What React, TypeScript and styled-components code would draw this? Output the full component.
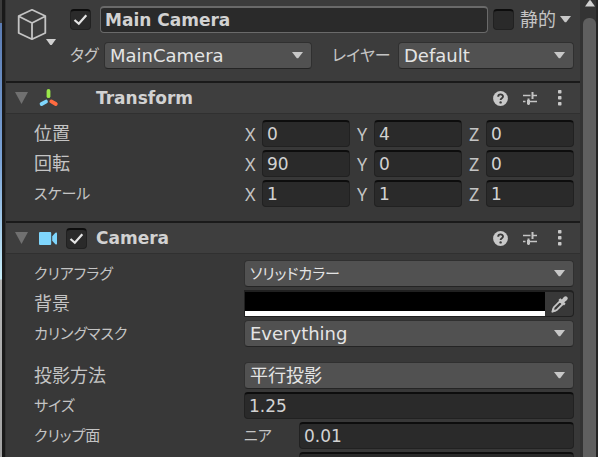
import React from "react";
import styled, { createGlobalStyle, css } from "styled-components";

const GlobalStyle = createGlobalStyle`
  *, *::before, *::after { box-sizing: border-box; }
  html, body { margin: 0; background: #383838; }
  body {
    font-family: "DejaVu Sans", "Noto Sans CJK JP", sans-serif;
    font-size: 18px;
    line-height: 24px;
    color: #c4c4c4;
    overflow: hidden;
  }
`;

const Window = styled.div`
  display: grid;
  grid-template-columns: 2px 4px minmax(0, 1fr) 16px 2px;
  height: 100vh;
  overflow: hidden;
`;

const SceneEdge = styled.div`
  background: linear-gradient(
    #3c3c3c 0 23px,
    #5b7bb2 23px,
    #7ba3d6 160px,
    #c8edf8 279px,
    #b4b4b4 280px,
    #a4a4a4 100%
  );
`;

const Divider = styled.div`
  background: #191919;
  border-right: 1px solid #303030;
`;

const Inspector = styled.main`
  min-width: 0;
  overflow: hidden;
`;

const ObjectHeader = styled.header`
  display: grid;
  grid-template-columns: 54px minmax(0, 1fr);
  padding: 6px 6px 12px 10px;
  background: #3c3c3c;
`;

const HeaderRows = styled.div`
  display: flex;
  flex-direction: column;
  gap: 9px;
`;

const HeaderRow = styled.div`
  display: flex;
  align-items: center;
  height: 27px;
`;

const IconButton = styled.button`
  display: flex;
  padding: 0;
  border: 0;
  background: none;
  color: #c4c4c4;
`;

const ObjectIconButton = styled(IconButton)`
  align-self: start;
  padding-top: 2px;
`;

const StaticMenu = styled(IconButton)`
  width: 18px;
  height: 27px;
  align-items: center;
  justify-content: center;
`;

const inputSurface = css`
  background: #2a2a2a;
  border: 1px solid #212121;
  border-top: 2px solid #0d0d0d;
  border-radius: 4px;
  outline: none;
`;

const TextInput = styled.input`
  ${inputSurface}
  display: block;
  flex: 1;
  width: 100%;
  min-width: 0;
  height: 27px;
  padding: 0 4px;
  font-family: "DejaVu Sans", sans-serif;
  font-size: 17px;
  color: #d2d2d2;
`;

const NameInput = styled(TextInput)`
  margin: 0 5px 0 9px;
  border: 1px solid #6a6a6a;
  border-top: 2px solid #6a6a6a;
  font-weight: 700;
`;

const CheckWrap = styled.span`
  display: grid;
  flex: none;
  width: 21px;
  height: 21px;
  > * { grid-area: 1 / 1; }
  > svg { pointer-events: none; }
`;

const CheckInput = styled.input`
  ${inputSurface}
  appearance: none;
  width: 21px;
  height: 21px;
  margin: 0;
`;

const StaticLabel = styled.label`
  margin-left: 6px;
  font-size: 18px;
`;

const HeaderLabel = styled.label<{ $width: number; $gap?: number }>`
  flex: none;
  width: ${(p) => p.$width}px;
  margin-left: ${(p) => p.$gap ?? 0}px;
  font-size: 16px;
  font-feature-settings: "palt";
  white-space: nowrap;
`;

const SelectWrap = styled.span<{ $grow?: number }>`
  display: grid;
  flex: ${(p) => p.$grow ?? 1} 1 0;
  min-width: 0;
  align-items: center;
  > * { grid-area: 1 / 1; }
  > svg { justify-self: end; margin-right: 9px; pointer-events: none; }
`;

const SelectBox = styled.select<{ $kana?: boolean }>`
  appearance: none;
  display: block;
  width: 100%;
  min-width: 0;
  height: 27px;
  padding: 0 28px 0 5px;
  border: 1px solid #303030;
  border-bottom-color: #242424;
  border-radius: 4px;
  background: #515151;
  color: #e4e4e4;
  font-family: "DejaVu Sans", "Noto Sans CJK JP", sans-serif;
  font-size: ${(p) => (p.$kana ? 15 : 18)}px;
  line-height: 24px;
  font-feature-settings: "palt";
  outline: none;
`;

const Component = styled.section`
  border-top: 2px solid #1a1a1a;
`;

const ComponentBar = styled.div`
  display: flex;
  align-items: center;
  height: 31px;
  padding: 0 13px 0 9px;
  background: #3e3e3e;
  border-bottom: 1px solid #303030;
`;

const BarIcon = styled.span`
  display: flex;
  flex: none;
  width: 27px;
  margin-left: 11px;
`;

const ToggleSlot = styled.span`
  flex: none;
  width: 30px;
`;

const Title = styled.h2`
  flex: 1;
  margin: 0;
  font-size: 17px;
  line-height: 24px;
  font-weight: 700;
  color: #d2d2d2;
`;

const Tools = styled.div`
  display: flex;
  align-items: center;
  gap: 14px;
`;

const Fields = styled.div`
  display: flex;
  flex-direction: column;
  gap: 3px;
  padding: 6px 6px 14px 28px;
`;

const Field = styled.div<{ $spaced?: boolean }>`
  display: grid;
  grid-template-columns: 210px minmax(0, 1fr);
  align-items: center;
  height: 27px;
  margin-top: ${(p) => (p.$spaced ? 12 : 0)}px;
`;

const FieldLabel = styled.label<{ $kana?: boolean }>`
  font-size: ${(p) => (p.$kana ? 15 : 18)}px;
  font-feature-settings: "palt";
  white-space: nowrap;
`;

const Vector = styled.div`
  display: grid;
  grid-template-columns: repeat(3, minmax(0, 1fr));
  gap: 6px;
`;

const Axis = styled.label`
  display: flex;
  align-items: center;
  font-family: "Noto Sans", sans-serif;
  font-size: 18px;
`;

const AxisName = styled.span`
  flex: none;
  width: 18px;
  padding-left: 1px;
`;

const ColorField = styled.div`
  display: flex;
  height: 27px;
  border: 1px solid #202020;
  border-top-width: 2px;
  border-radius: 0 4px 4px 0;
`;

const Swatch = styled.button`
  flex: 1;
  padding: 0;
  border: 0;
  border-bottom: 5px solid #ffffff;
  background: #000000;
`;

const Picker = styled(IconButton)`
  width: 28px;
  align-items: center;
  justify-content: center;
`;

const ClipRow = styled.div`
  display: grid;
  grid-template-columns: 55px minmax(0, 1fr);
  align-items: center;
`;

const ScrollBar = styled.aside`
  display: flex;
  flex-direction: column;
  padding: 0 0 0 3px;
  background: #333333;
`;

const ScrollUp = styled(IconButton)`
  height: 18px;
  justify-content: center;
`;

const ScrollThumb = styled.div`
  flex: 1;
  border-radius: 6px 6px 0 0;
  background: #5f5f5f;
`;

const FarEdge = styled.div`
  background: #242424;
`;

const Caret = () => (
  <svg width="11" height="7" viewBox="0 0 11 7" aria-hidden="true">
    <path d="M0 0h11L6.2 6.2h-1.4z" fill="#c8c8c8" />
  </svg>
);

const CubeIcon = () => (
  <svg width="42" height="38" viewBox="0 0 42 38" fill="none" aria-hidden="true">
    <path
      d="M16 1.8 29.3 8v17L16 31.2 2.7 25V8zM2.7 8.2 16 15l13.3-6.8M16 15v16"
      stroke="#c4c4c4"
      strokeWidth="1.8"
      strokeLinejoin="round"
    />
    <path d="M30 31h10l-4.3 6h-1.4z" fill="#d0d0d0" />
  </svg>
);

const Foldout = () => (
  <svg width="13" height="12" viewBox="0 0 13 12" aria-hidden="true">
    <path d="M0 0h13L6.5 12z" fill="#707070" />
  </svg>
);

const AxesIcon = () => (
  <svg width="20" height="18" viewBox="0 0 20 18" strokeWidth="3.8" aria-hidden="true">
    <path d="M9.5 7.2V2" stroke="#9be84a" strokeLinecap="round" />
    <path d="M7 12.6 2.6 15" stroke="#7fd6fd" strokeLinecap="round" />
    <path d="M12.3 12.4 16.8 15" stroke="#ff6b40" strokeLinecap="round" />
  </svg>
);

const CameraIcon = () => (
  <svg width="19" height="13" viewBox="0 0 19 13" fill="#7fd6fd" aria-hidden="true">
    <rect width="12.2" height="13" rx="1" />
    <path d="M13.2 4.2 16.4.8q1.6-1 1.6.6v10.2q0 1.600-1.600.6l-3.200-3.400z" />
  </svg>
);

const CheckMark = () => (
  <svg width="21" height="21" viewBox="0 0 21 21" fill="none" aria-hidden="true">
    <path d="M4.5 11 8.8 14.8 16.3 6.2" stroke="#e4e4e4" strokeWidth="2.2" />
  </svg>
);

const HelpIcon = () => (
  <svg width="15" height="15" viewBox="0 0 15 15" fill="none" aria-hidden="true">
    <circle cx="7.5" cy="7.5" r="7.4" fill="#c8c8c8" />
    <path
      d="M5.2 5.7c0-3 4.8-3 4.8-.2 0 1.7-2.4 1.7-2.4 3.6"
      stroke="#3a3a3a"
      strokeWidth="1.9"
    />
    <circle cx="7.6" cy="11.4" r="1.2" fill="#3a3a3a" />
  </svg>
);

const PresetIcon = () => (
  <svg width="16" height="15" viewBox="0 0 16 15" aria-hidden="true">
    <path
      d="M1 4.5h7.5M10.5 4.5h4.5M1 10.5h2.5M7 10.5h8"
      stroke="#c4c4c4"
      strokeWidth="1.4"
    />
    <path d="M10.5 1v7M6.5 7.5v6.5" stroke="#c4c4c4" strokeWidth="2" />
    <path d="M5 9h3v4H5z" fill="#c4c4c4" />
  </svg>
);

const MoreIcon = () => (
  <svg width="15" height="16" viewBox="0 0 15 16" fill="#c8c8c8" aria-hidden="true">
    <rect x="6" y="0" width="3.5" height="3.5" rx=".7" />
    <rect x="6" y="6" width="3.5" height="3.5" rx=".7" />
    <rect x="6" y="12" width="3.5" height="3.5" rx=".7" />
  </svg>
);

const EyedropperIcon = () => (
  <svg width="17" height="17" viewBox="0 0 17 17" aria-hidden="true">
    <path
      d="M9 5.2 2.8 11.4 1.4 15.6 5.6 14.2 11.8 8z"
      fill="none"
      stroke="#c4c4c4"
      strokeWidth="1.8"
      strokeLinejoin="round"
    />
    <path d="m.6 16.4 1.2-4.4 3.2 3.2z" fill="#c4c4c4" />
    <path
      d="m7.4 4 1.9-1.7 1.6 1.2 2-2.5Q14.6-.4 16.2.9q1.3 1.6-.4 3.3l-2.5 2 1.3 1.6L13 9.6z"
      fill="#c4c4c4"
    />
  </svg>
);

const UpIcon = () => (
  <svg width="10" height="7" viewBox="0 0 10 7" aria-hidden="true">
    <path d="M0 6.5 4.4.3h1.2L10 6.5z" fill="#d0d0d0" />
  </svg>
);

function CheckBox({ id, label, checked }: { id: string; label?: string; checked?: boolean }) {
  return (
    <CheckWrap>
      <CheckInput id={id} type="checkbox" aria-label={label} defaultChecked={checked} />
      {checked && <CheckMark />}
    </CheckWrap>
  );
}

function DropDown({ id, value, kana, grow }: { id: string; value: string; kana?: boolean; grow?: number }) {
  return (
    <SelectWrap $grow={grow}>
      <SelectBox id={id} $kana={kana} defaultValue={value}>
        <option>{value}</option>
      </SelectBox>
      <Caret />
    </SelectWrap>
  );
}

function BarTools() {
  return (
    <Tools>
      <IconButton aria-label="Help"><HelpIcon /></IconButton>
      <IconButton aria-label="Presets"><PresetIcon /></IconButton>
      <IconButton aria-label="More"><MoreIcon /></IconButton>
    </Tools>
  );
}

const vectors = [
  { label: "位置", values: ["0", "4", "0"] },
  { label: "回転", values: ["90", "0", "0"] },
  { label: "スケール", kana: true, values: ["1", "1", "1"] },
];

const axes = ["X", "Y", "Z"];

export default function App() {
  return (
    <>
      <GlobalStyle />
      <Window>
        <SceneEdge />
        <Divider />
        <Inspector>
          <ObjectHeader>
            <ObjectIconButton aria-label="Icon"><CubeIcon /></ObjectIconButton>
            <HeaderRows>
              <HeaderRow>
                <CheckBox id="active" label="Active" checked />
                <NameInput aria-label="Name" defaultValue="Main Camera" />
                <CheckBox id="static" />
                <StaticLabel htmlFor="static">静的</StaticLabel>
                <StaticMenu aria-label="Static flags"><Caret /></StaticMenu>
              </HeaderRow>
              <HeaderRow>
                <HeaderLabel htmlFor="tag" $width={34}>タグ</HeaderLabel>
                <DropDown id="tag" value="MainCamera" grow={13} />
                <HeaderLabel htmlFor="layer" $width={66} $gap={20}>レイヤー</HeaderLabel>
                <DropDown id="layer" value="Default" grow={11} />
              </HeaderRow>
            </HeaderRows>
          </ObjectHeader>

          <Component>
            <ComponentBar>
              <IconButton aria-label="Fold"><Foldout /></IconButton>
              <BarIcon><AxesIcon /></BarIcon>
              <ToggleSlot />
              <Title>Transform</Title>
              <BarTools />
            </ComponentBar>
            <Fields>
              {vectors.map((row) => (
                <Field key={row.label}>
                  <FieldLabel as="span" $kana={row.kana}>{row.label}</FieldLabel>
                  <Vector role="group" aria-label={row.label}>
                    {axes.map((axis, i) => (
                      <Axis key={axis}>
                        <AxisName>{axis}</AxisName>
                        <TextInput defaultValue={row.values[i]} />
                      </Axis>
                    ))}
                  </Vector>
                </Field>
              ))}
            </Fields>
          </Component>

          <Component>
            <ComponentBar>
              <IconButton aria-label="Fold"><Foldout /></IconButton>
              <BarIcon><CameraIcon /></BarIcon>
              <ToggleSlot>
                <CheckBox id="camera-on" label="Camera" checked />
              </ToggleSlot>
              <Title>Camera</Title>
              <BarTools />
            </ComponentBar>
            <Fields>
              <Field>
                <FieldLabel htmlFor="clear" $kana>クリアフラグ</FieldLabel>
                <DropDown id="clear" value="ソリッドカラー" kana />
              </Field>
              <Field>
                <FieldLabel htmlFor="background">背景</FieldLabel>
                <ColorField>
                  <Swatch id="background" />
                  <Picker aria-label="Pick color"><EyedropperIcon /></Picker>
                </ColorField>
              </Field>
              <Field>
                <FieldLabel htmlFor="culling" $kana>カリングマスク</FieldLabel>
                <DropDown id="culling" value="Everything" />
              </Field>
              <Field $spaced>
                <FieldLabel htmlFor="projection">投影方法</FieldLabel>
                <DropDown id="projection" value="平行投影" />
              </Field>
              <Field>
                <FieldLabel htmlFor="size" $kana>サイズ</FieldLabel>
                <TextInput id="size" defaultValue="1.25" />
              </Field>
              <Field>
                <FieldLabel as="span" $kana>クリップ面</FieldLabel>
                <ClipRow>
                  <FieldLabel htmlFor="near" $kana>ニア</FieldLabel>
                  <TextInput id="near" defaultValue="0.01" />
                </ClipRow>
              </Field>
              <Field>
                <span />
                <ClipRow>
                  <span />
                  <TextInput aria-label="Far" />
                </ClipRow>
              </Field>
            </Fields>
          </Component>
        </Inspector>
        <ScrollBar>
          <ScrollUp aria-label="Scroll up"><UpIcon /></ScrollUp>
          <ScrollThumb />
        </ScrollBar>
        <FarEdge />
      </Window>
    </>
  );
}
